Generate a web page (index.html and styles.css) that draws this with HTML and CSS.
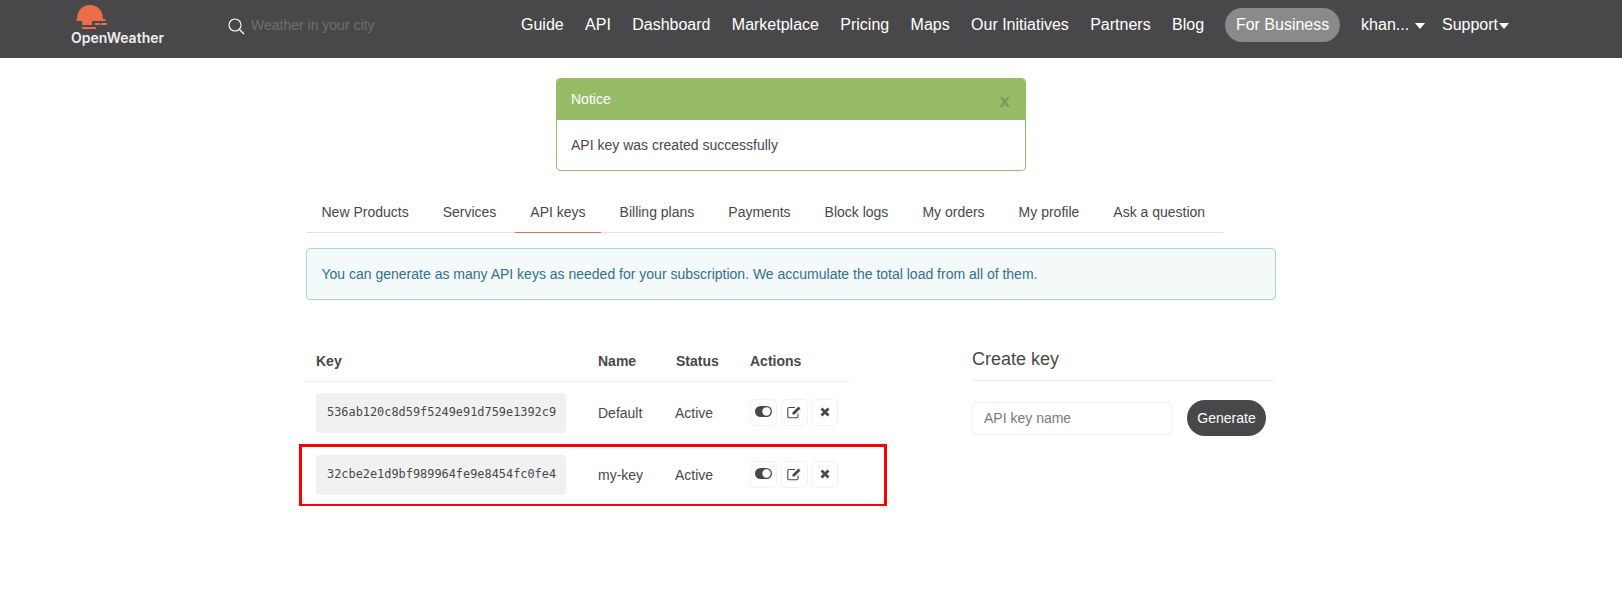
FILE: index.html
```html
<!DOCTYPE html>
<html lang="en">
<head>
    <meta charset="UTF-8">
    <title>API keys - OpenWeatherMap</title>
    <link rel="stylesheet" href="styles.css">
</head>
<body>
    <header class="topbar">
        <a class="logo" href="#">
            <svg class="logo-sun" width="34" height="26" viewBox="0 0 34 26">
                <path d="M2 15C2 6 8 1 15 1S28 6 28 15Z" fill="#eb6e4b"/>
                <path d="M1.500 15H30.500V17H1.500ZM7 17H17V21H7ZM20 19H25V21H20ZM26 19H32V21H26ZM7 23H21V25H7Z" fill="#eb6e4b"/>
            </svg>
            <span class="logo-text">OpenWeather</span>
        </a>
        <div class="search">
            <svg width="17" height="17" viewBox="0 0 17 17">
                <circle cx="7" cy="7" r="6" fill="none" stroke="#fff" stroke-width="1.100"/>
                <path d="M11.500 11.500L16 16" stroke="#fff" stroke-width="1.300"/>
            </svg>
            <span class="search-text">Weather in your city</span>
        </div>
        <nav class="mainnav">
            <a href="#">Guide</a>
            <a href="#">API</a>
            <a href="#">Dashboard</a>
            <a href="#">Marketplace</a>
            <a href="#">Pricing</a>
            <a href="#">Maps</a>
            <a href="#">Our Initiatives</a>
            <a href="#">Partners</a>
            <a href="#">Blog</a>
            <a class="pill" href="#">For Business</a>
            <a class="drop user" href="#">khan...</a>
            <a class="drop" href="#">Support</a>
        </nav>
    </header>

    <main class="page">
        <section class="notice">
            <div class="notice-head">
                <span>Notice</span>
                <span class="notice-close">x</span>
            </div>
            <div class="notice-body">API key was created successfully</div>
        </section>

        <ul class="tabs">
            <li><a href="#">New Products</a></li>
            <li><a href="#">Services</a></li>
            <li class="active"><a href="#">API keys</a></li>
            <li><a href="#">Billing plans</a></li>
            <li><a href="#">Payments</a></li>
            <li><a href="#">Block logs</a></li>
            <li><a href="#">My orders</a></li>
            <li><a href="#">My profile</a></li>
            <li><a href="#">Ask a question</a></li>
        </ul>

        <div class="info">You can generate as many API keys as needed for your subscription. We accumulate the total load from all of them.</div>

        <div class="columns">
            <div class="keys">
                <table>
                    <thead>
                        <tr>
                            <th class="col-key">Key</th>
                            <th class="col-name">Name</th>
                            <th class="col-status">Status</th>
                            <th>Actions</th>
                        </tr>
                    </thead>
                    <tbody>
                        <tr>
                            <td><code>536ab120c8d59f5249e91d759e1392c9</code></td>
                            <td>Default</td>
                            <td class="cell-status">Active</td>
                            <td>
                                <div class="actions">
                                    <button class="icon-btn"><svg width="17" height="11" viewBox="0 0 17 11"><rect width="17" height="11" rx="5.500" fill="#48484a"/><circle cx="11.500" cy="5.500" r="4.200" fill="#fff"/></svg></button>
                                    <button class="icon-btn"><svg width="15" height="14" viewBox="0 0 15 14"><path d="M11 8.500V11.500Q11 12.700 9.800 12.700H2Q.800 12.700 .800 11.500V3.700Q.800 2.500 2 2.500H8" fill="none" stroke="#48484a" stroke-width="1.100"/><path d="M5.500 7.500L11.500 1.500L13.500 3.500L7.500 9.500H5.500Z" fill="#48484a"/></svg></button>
                                    <button class="icon-btn"><svg width="10" height="10" viewBox="0 0 10 10"><path d="M1.500 1.500L8.500 8.500M8.500 1.500L1.500 8.500" stroke="#48484a" stroke-width="2.800"/></svg></button>
                                </div>
                            </td>
                        </tr>
                        <tr>
                            <td><code>32cbe2e1d9bf989964fe9e8454fc0fe4</code></td>
                            <td>my-key</td>
                            <td class="cell-status">Active</td>
                            <td>
                                <div class="actions">
                                    <button class="icon-btn"><svg width="17" height="11" viewBox="0 0 17 11"><rect width="17" height="11" rx="5.500" fill="#48484a"/><circle cx="11.500" cy="5.500" r="4.200" fill="#fff"/></svg></button>
                                    <button class="icon-btn"><svg width="15" height="14" viewBox="0 0 15 14"><path d="M11 8.500V11.500Q11 12.700 9.800 12.700H2Q.800 12.700 .800 11.500V3.700Q.800 2.500 2 2.500H8" fill="none" stroke="#48484a" stroke-width="1.100"/><path d="M5.500 7.500L11.500 1.500L13.500 3.500L7.500 9.500H5.500Z" fill="#48484a"/></svg></button>
                                    <button class="icon-btn"><svg width="10" height="10" viewBox="0 0 10 10"><path d="M1.500 1.500L8.500 8.500M8.500 1.500L1.500 8.500" stroke="#48484a" stroke-width="2.800"/></svg></button>
                                </div>
                            </td>
                        </tr>
                    </tbody>
                </table>
                <div class="highlight"></div>
            </div>

            <aside class="create">
                <h2>Create key</h2>
                <form class="create-form">
                    <input type="text" placeholder="API key name">
                    <button type="button" class="generate">Generate</button>
                </form>
            </aside>
        </div>
    </main>
</body>
</html>
```

FILE: styles.css
```css
body {
    margin: 0;
    font-family: "Liberation Sans", Arial, sans-serif;
    font-size: 14px;
    line-height: 20px;
    color: #48484a;
    background: #fff;
}
a {
    color: inherit;
    text-decoration: none;
}

/* top bar */
.topbar {
    display: flex;
    align-items: center;
    height: 58px;
    padding-left: 71px;
    background: #48484a;
    color: #fff;
    box-sizing: border-box;
}
.logo {
    display: flex;
    flex-direction: column;
    align-items: flex-start;
    width: 157px;
    height: 58px;
}
.logo-sun {
    margin: 4px 0 0 4px;
    display: block;
}
.logo-text {
    font-family: Inter, "Liberation Sans", sans-serif;
    font-size: 14px;
    font-weight: 600;
    line-height: 16px;
    color: #eee;
}
.search {
    display: flex;
    align-items: center;
    gap: 6px;
    width: 293px;
    margin-bottom: 8px;
}
.search svg {
    margin-top: 2px;
}
.search-text {
    font-size: 14px;
    color: #6f6f70;
}
.mainnav {
    display: flex;
    align-items: center;
    gap: 21.350px;
    margin-bottom: 8px;
    font-size: 16px;
}
.pill {
    padding: 7px 10.500px;
    border-radius: 17px;
    background: #8a8a8b;
}
.drop::after {
    content: "";
    display: inline-block;
    margin-left: 1px;
    vertical-align: 1px;
    border: 5px solid transparent;
    border-top: 6px solid #fff;
    border-bottom: 0;
}
.user {
    margin-right: -4.500px;
}
.user::after {
    margin-left: 6px;
}

/* page */
.page {
    width: 970px;
    margin-left: 306px;
    padding-top: 20px;
}

.notice {
    width: 470px;
    margin-left: 250px;
    border: 1px solid #97bc68;
    border-radius: 4px;
    box-sizing: border-box;
    overflow: hidden;
}
.notice-head {
    display: flex;
    justify-content: space-between;
    align-items: center;
    height: 41px;
    padding: 0 15px 2px 14px;
    box-sizing: border-box;
    background: #97bc68;
    color: #fff;
}
.notice-close {
    font-size: 19px;
    font-weight: bold;
    color: #7a9c58;
    padding-top: 4px;
}
.notice-body {
    padding: 15px 14px;
}

.tabs {
    display: flex;
    width: 917px;
    height: 41px;
    margin: 20px 0 0;
    padding: 0;
    list-style: none;
    border-bottom: 1px solid #e3e3e3;
    white-space: nowrap;
}
.tabs li {
    flex: none;
    margin-right: 3px;
}
.tabs a {
    display: block;
    height: 41px;
    padding: 11px 15.500px 0;
    box-sizing: border-box;
}
.tabs .active a {
    border-bottom: 1px solid #eb6e4b;
    height: 42px;
}

.info {
    margin-top: 15px;
    padding: 15px 15px 15px 14.500px;
    border: 1px solid #9fd9d1;
    border-radius: 4px;
    background: #f4fafa;
    color: #31708f;
}

.columns {
    display: flex;
    margin-top: 41px;
}
.keys {
    position: relative;
    width: 544px;
    margin-right: 122px;
}
table {
    width: 100%;
    border-collapse: collapse;
}
th {
    padding: 10px;
    text-align: left;
    border-bottom: 1px solid #eee;
}
.col-key {
    width: 262px;
}
.col-name {
    width: 58px;
}
.col-status {
    width: 54px;
}
td {
    padding: 11px 10px;
}
td.cell-status {
    padding-left: 9px;
}
code {
    display: block;
    width: 250px;
    height: 40px;
    padding-left: 11px;
    box-sizing: border-box;
    font-family: "DejaVu Sans Mono", monospace;
    font-size: 11.900px;
    line-height: 38px;
    border-radius: 4px;
    background: #f1f1f1;
}
.actions {
    display: flex;
    gap: 3.500px;
    margin-top: -1px;
}
.icon-btn {
    display: flex;
    align-items: center;
    justify-content: center;
    width: 27px;
    height: 27px;
    padding: 0 0 2px;
    border: 1px solid #f2f2f2;
    border-radius: 5px;
    background: #fff;
}
.highlight {
    position: absolute;
    left: -7px;
    top: 103px;
    width: 582px;
    height: 57px;
    border: 3px solid #f00;
}

/* create key */
.create {
    width: 303px;
}
.create h2 {
    margin: 0;
    height: 39px;
    font-size: 18px;
    font-weight: normal;
    line-height: 36px;
    border-bottom: 1px solid #eee;
}
.create-form {
    display: flex;
    align-items: center;
    gap: 15px;
    margin-top: 19px;
}
.create-form input {
    width: 200px;
    height: 33px;
    padding: 0 11px;
    box-sizing: border-box;
    border: 1px solid #f2f2f2;
    border-radius: 3px;
    font: inherit;
}
.create-form input::placeholder {
    color: #7a7a7c;
}
.generate {
    width: 79px;
    height: 36px;
    padding: 0;
    border: 0;
    border-radius: 18px;
    background: #48484a;
    color: #fff;
    font: inherit;
}
```
